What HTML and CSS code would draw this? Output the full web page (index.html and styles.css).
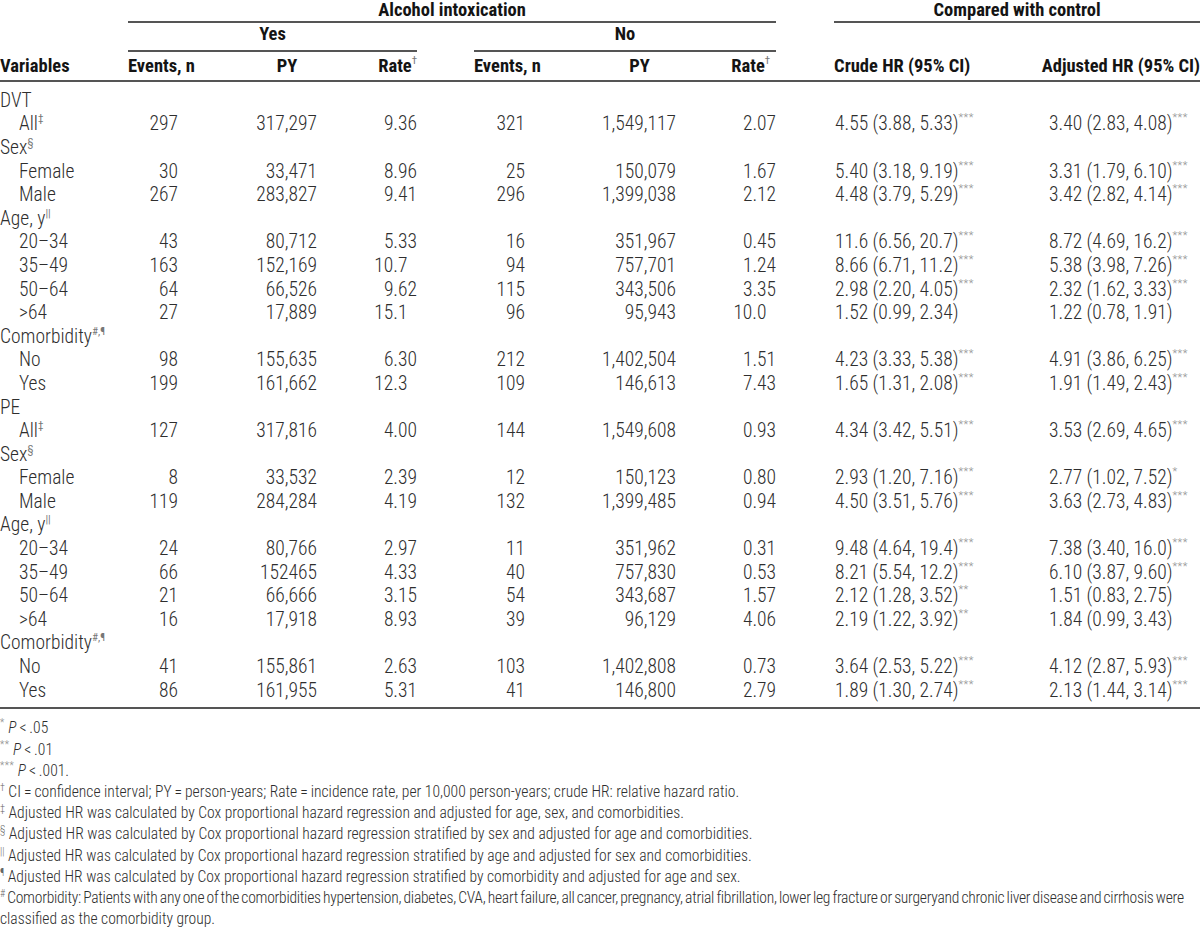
FILE: index.html
```html
<!DOCTYPE html>
<html>
<head>
<meta charset="utf-8">
<link rel="stylesheet" href="styles.css">
</head>
<body>
<table class="tbl">
  <colgroup>
    <col class="c-var"><col class="c-ev"><col class="c-py"><col class="c-rt">
    <col class="c-sp1"><col class="c-ev2"><col class="c-py2"><col class="c-rt2">
    <col class="c-sp2"><col class="c-cr"><col class="c-ad">
  </colgroup>
  <thead>
    <tr class="h1">
      <th></th>
      <th colspan="7" class="grp">Alcohol intoxication</th>
      <th></th>
      <th colspan="2" class="grp">Compared with control</th>
    </tr>
    <tr class="h2">
      <th></th>
      <th colspan="3" class="grp">Yes</th>
      <th></th>
      <th colspan="3" class="grp">No</th>
      <th></th><th></th><th></th>
    </tr>
    <tr class="h3">
      <th class="l">Variables</th>
      <th class="l">Events, n</th>
      <th class="py">PY</th>
      <th class="r">Rate<sup class="mk">†</sup></th>
      <th></th>
      <th class="l">Events, n</th>
      <th class="py2">PY</th>
      <th class="r rt2h">Rate<sup class="mk">†</sup></th>
      <th></th>
      <th class="l">Crude HR (95% CI)</th>
      <th class="r">Adjusted HR (95% CI)</th>
    </tr>
  </thead>
  <tbody>
    <tr class="sec first"><td colspan="11">DVT</td></tr>
    <tr><td class="in">All<sup class="mk">‡</sup></td><td class="ev">297</td><td class="pyv">317,297</td><td class="rt">9.36</td><td></td><td class="ev2">321</td><td class="py2v">1,549,117</td><td class="rt">2.07</td><td></td><td class="cr">4.55 (3.88, 5.33)<sup class="st">***</sup></td><td class="ad">3.40 (2.83, 4.08)<sup class="st">***</sup></td></tr>
    <tr class="sec"><td colspan="11">Sex<sup class="mk">§</sup></td></tr>
    <tr><td class="in">Female</td><td class="ev">30</td><td class="pyv">33,471</td><td class="rt">8.96</td><td></td><td class="ev2">25</td><td class="py2v">150,079</td><td class="rt">1.67</td><td></td><td class="cr">5.40 (3.18, 9.19)<sup class="st">***</sup></td><td class="ad">3.31 (1.79, 6.10)<sup class="st">***</sup></td></tr>
    <tr><td class="in">Male</td><td class="ev">267</td><td class="pyv">283,827</td><td class="rt">9.41</td><td></td><td class="ev2">296</td><td class="py2v">1,399,038</td><td class="rt">2.12</td><td></td><td class="cr">4.48 (3.79, 5.29)<sup class="st">***</sup></td><td class="ad">3.42 (2.82, 4.14)<sup class="st">***</sup></td></tr>
    <tr class="sec"><td colspan="11">Age, y<sup class="mk">||</sup></td></tr>
    <tr><td class="in">20–34</td><td class="ev">43</td><td class="pyv">80,712</td><td class="rt">5.33</td><td></td><td class="ev2">16</td><td class="py2v">351,967</td><td class="rt">0.45</td><td></td><td class="cr">11.6 (6.56, 20.7)<sup class="st">***</sup></td><td class="ad">8.72 (4.69, 16.2)<sup class="st">***</sup></td></tr>
    <tr><td class="in">35–49</td><td class="ev">163</td><td class="pyv">152,169</td><td class="rt">10.7&#8199;</td><td></td><td class="ev2">94</td><td class="py2v">757,701</td><td class="rt">1.24</td><td></td><td class="cr">8.66 (6.71, 11.2)<sup class="st">***</sup></td><td class="ad">5.38 (3.98, 7.26)<sup class="st">***</sup></td></tr>
    <tr><td class="in">50–64</td><td class="ev">64</td><td class="pyv">66,526</td><td class="rt">9.62</td><td></td><td class="ev2">115</td><td class="py2v">343,506</td><td class="rt">3.35</td><td></td><td class="cr">2.98 (2.20, 4.05)<sup class="st">***</sup></td><td class="ad">2.32 (1.62, 3.33)<sup class="st">***</sup></td></tr>
    <tr><td class="in">&gt;64</td><td class="ev">27</td><td class="pyv">17,889</td><td class="rt">15.1&#8199;</td><td></td><td class="ev2">96</td><td class="py2v">95,943</td><td class="rt">10.0&#8199;</td><td></td><td class="cr">1.52 (0.99, 2.34)</td><td class="ad">1.22 (0.78, 1.91)</td></tr>
    <tr class="sec"><td colspan="11">Comorbidity<sup class="mk">#,¶</sup></td></tr>
    <tr><td class="in">No</td><td class="ev">98</td><td class="pyv">155,635</td><td class="rt">6.30</td><td></td><td class="ev2">212</td><td class="py2v">1,402,504</td><td class="rt">1.51</td><td></td><td class="cr">4.23 (3.33, 5.38)<sup class="st">***</sup></td><td class="ad">4.91 (3.86, 6.25)<sup class="st">***</sup></td></tr>
    <tr><td class="in">Yes</td><td class="ev">199</td><td class="pyv">161,662</td><td class="rt">12.3&#8199;</td><td></td><td class="ev2">109</td><td class="py2v">146,613</td><td class="rt">7.43</td><td></td><td class="cr">1.65 (1.31, 2.08)<sup class="st">***</sup></td><td class="ad">1.91 (1.49, 2.43)<sup class="st">***</sup></td></tr>
    <tr class="sec"><td colspan="11">PE</td></tr>
    <tr><td class="in">All<sup class="mk">‡</sup></td><td class="ev">127</td><td class="pyv">317,816</td><td class="rt">4.00</td><td></td><td class="ev2">144</td><td class="py2v">1,549,608</td><td class="rt">0.93</td><td></td><td class="cr">4.34 (3.42, 5.51)<sup class="st">***</sup></td><td class="ad">3.53 (2.69, 4.65)<sup class="st">***</sup></td></tr>
    <tr class="sec"><td colspan="11">Sex<sup class="mk">§</sup></td></tr>
    <tr><td class="in">Female</td><td class="ev">8</td><td class="pyv">33,532</td><td class="rt">2.39</td><td></td><td class="ev2">12</td><td class="py2v">150,123</td><td class="rt">0.80</td><td></td><td class="cr">2.93 (1.20, 7.16)<sup class="st">***</sup></td><td class="ad">2.77 (1.02, 7.52)<sup class="st">*</sup></td></tr>
    <tr><td class="in">Male</td><td class="ev">119</td><td class="pyv">284,284</td><td class="rt">4.19</td><td></td><td class="ev2">132</td><td class="py2v">1,399,485</td><td class="rt">0.94</td><td></td><td class="cr">4.50 (3.51, 5.76)<sup class="st">***</sup></td><td class="ad">3.63 (2.73, 4.83)<sup class="st">***</sup></td></tr>
    <tr class="sec"><td colspan="11">Age, y<sup class="mk">||</sup></td></tr>
    <tr><td class="in">20–34</td><td class="ev">24</td><td class="pyv">80,766</td><td class="rt">2.97</td><td></td><td class="ev2">11</td><td class="py2v">351,962</td><td class="rt">0.31</td><td></td><td class="cr">9.48 (4.64, 19.4)<sup class="st">***</sup></td><td class="ad">7.38 (3.40, 16.0)<sup class="st">***</sup></td></tr>
    <tr><td class="in">35–49</td><td class="ev">66</td><td class="pyv">152465</td><td class="rt">4.33</td><td></td><td class="ev2">40</td><td class="py2v">757,830</td><td class="rt">0.53</td><td></td><td class="cr">8.21 (5.54, 12.2)<sup class="st">***</sup></td><td class="ad">6.10 (3.87, 9.60)<sup class="st">***</sup></td></tr>
    <tr><td class="in">50–64</td><td class="ev">21</td><td class="pyv">66,666</td><td class="rt">3.15</td><td></td><td class="ev2">54</td><td class="py2v">343,687</td><td class="rt">1.57</td><td></td><td class="cr">2.12 (1.28, 3.52)<sup class="st">**</sup></td><td class="ad">1.51 (0.83, 2.75)</td></tr>
    <tr><td class="in">&gt;64</td><td class="ev">16</td><td class="pyv">17,918</td><td class="rt">8.93</td><td></td><td class="ev2">39</td><td class="py2v">96,129</td><td class="rt">4.06</td><td></td><td class="cr">2.19 (1.22, 3.92)<sup class="st">**</sup></td><td class="ad">1.84 (0.99, 3.43)</td></tr>
    <tr class="sec"><td colspan="11">Comorbidity<sup class="mk">#,¶</sup></td></tr>
    <tr><td class="in">No</td><td class="ev">41</td><td class="pyv">155,861</td><td class="rt">2.63</td><td></td><td class="ev2">103</td><td class="py2v">1,402,808</td><td class="rt">0.73</td><td></td><td class="cr">3.64 (2.53, 5.22)<sup class="st">***</sup></td><td class="ad">4.12 (2.87, 5.93)<sup class="st">***</sup></td></tr>
    <tr class="last"><td class="in">Yes</td><td class="ev">86</td><td class="pyv">161,955</td><td class="rt">5.31</td><td></td><td class="ev2">41</td><td class="py2v">146,800</td><td class="rt">2.79</td><td></td><td class="cr">1.89 (1.30, 2.74)<sup class="st">***</sup></td><td class="ad">2.13 (1.44, 3.14)<sup class="st">***</sup></td></tr>
  </tbody>
</table>
<div class="notes">
  <p class="pn"><sup class="ps">*</sup> <i>P</i>&thinsp;&lt;&thinsp;.05</p>
  <p class="pn"><sup class="ps">**</sup> <i>P</i>&thinsp;&lt;&thinsp;.01</p>
  <p class="pn"><sup class="ps">***</sup> <i>P</i>&thinsp;&lt;&thinsp;.001.</p>
  <p><sup class="fm">†</sup> CI&thinsp;=&thinsp;confidence interval; PY&thinsp;=&thinsp;person-years; Rate&thinsp;=&thinsp;incidence rate, per 10,000 person-years; crude HR: relative hazard ratio.</p>
  <p><sup class="fm">‡</sup> Adjusted HR was calculated by Cox proportional hazard regression and adjusted for age, sex, and comorbidities.</p>
  <p><sup class="fm">§</sup> Adjusted HR was calculated by Cox proportional hazard regression stratified by sex and adjusted for age and comorbidities.</p>
  <p><sup class="fm">||</sup> Adjusted HR was calculated by Cox proportional hazard regression stratified by age and adjusted for sex and comorbidities.</p>
  <p><sup class="fm">¶</sup> Adjusted HR was calculated by Cox proportional hazard regression stratified by comorbidity and adjusted for age and sex.</p>
  <p><span class="tight"><sup class="fm">#</sup> Comorbidity: Patients with any one of the comorbidities hypertension, diabetes, CVA, heart failure, all cancer, pregnancy, atrial fibrillation, lower leg fracture or surgeryand chronic liver disease and cirrhosis were</span><br>classified as the comorbidity group.</p>
</div>
</body>
</html>
```

FILE: styles.css
```css
html, body {
  margin: 0;
  padding: 0;
  background: #ffffff;
}
body {
  width: 1200px;
  color: #2e2e2e;
  font-family: "Roboto Condensed", "Roboto", "Liberation Sans", sans-serif;
  font-stretch: condensed;
  font-size: 19.5px;
  font-weight: 300;
}
.tbl {
  width: 1200px;
  border-collapse: collapse;
  table-layout: fixed;
}
.tbl th, .tbl td {
  padding: 0;
  white-space: nowrap;
}
.c-var { width: 128px; }
.c-ev { width: 72px; }
.c-py { width: 130px; }
.c-rt { width: 87px; }
.c-sp1 { width: 57px; }
.c-ev2 { width: 71px; }
.c-py2 { width: 135px; }
.c-rt2 { width: 96px; }
.c-sp2 { width: 58px; }
.c-cr { width: 202px; }
.c-ad { width: 164px; }

.tbl th {
  font-weight: bold;
  font-size: 18.5px;
  color: #141414;
  vertical-align: middle;
}
.h1 th { height: 21px; line-height: 20px; }
.h2 th { height: 27px; line-height: 22px; }
.h3 th { height: 28px; line-height: 22px; border-bottom: 2px solid #555; }
.grp {
  text-align: center;
  border-bottom: 2px solid #555;
}
.h1 .grp, .h2 .grp { vertical-align: top; }
.l { text-align: left; }
.r { text-align: right; }
.py { text-align: center; padding-left: 44px !important; }
.py2 { text-align: center; padding-left: 54px !important; }
.rt2h { padding-right: 6px !important; }

.tbl td {
  height: 23.6px;
  line-height: 22px;
  vertical-align: middle;
}
.first td { padding-top: 7px; }
.last td { border-bottom: 2px solid #555; padding-bottom: 5px; }
.in { padding-left: 19px !important; }
.ev { text-align: right; padding-right: 22px !important; }
.pyv { text-align: right; padding-right: 13px !important; }
.rt { text-align: right; }
.ev2 { text-align: right; padding-right: 20px !important; }
.py2v { text-align: right; padding-right: 4px !important; }
.cr { padding-left: 1px !important; }
.ad { padding-left: 13px !important; }

.mk {
  font-size: 11px;
  color: #777;
  vertical-align: 8px;
  line-height: 0;
  font-weight: normal;
}
.st {
  font-size: 11px;
  color: #909090;
  vertical-align: 9px;
  line-height: 0;
  letter-spacing: 0.5px;
}
.notes {
  padding-top: 9px;
  font-size: 15.6px;
}
.notes p {
  margin: 0;
  line-height: 21.2px;
}
.notes i { font-style: italic; }
.ps {
  font-size: 10px;
  color: #8a8a8a;
  vertical-align: 7px;
  line-height: 0;
  letter-spacing: 0.5px;
}
.fm {
  font-size: 10px;
  color: #666;
  vertical-align: 6px;
  line-height: 0;
}
.tight {
  white-space: nowrap;
  letter-spacing: -0.25px;
  word-spacing: -1px;
}
```
